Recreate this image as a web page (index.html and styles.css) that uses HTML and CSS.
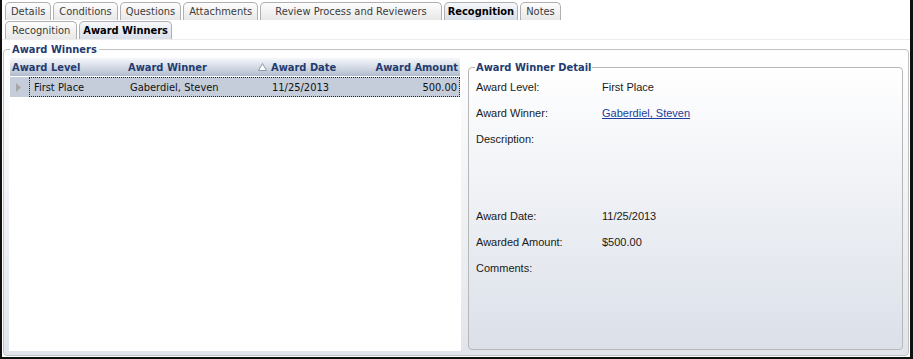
FILE: index.html
```html
<!DOCTYPE html>
<html lang="en">
<head>
  <meta charset="UTF-8" />
  <title>Recognition – Award Winners</title>
  <link rel="stylesheet" href="styles.css">
</head>
<body>
  <div class="window">
    <div class="tabs">
      <span class="tab">Details</span>
      <span class="tab">Conditions</span>
      <span class="tab">Questions</span>
      <span class="tab">Attachments</span>
      <span class="tab wide">Review Process and Reviewers</span>
      <span class="tab active">Recognition</span>
      <span class="tab">Notes</span>
    </div>
    <div class="tabs sub">
      <span class="tab">Recognition</span>
      <span class="tab active">Award Winners</span>
    </div>

    <fieldset class="group">
      <legend>Award Winners</legend>
      <div class="split">
        <div class="grid">
          <div class="grid-head">
            <span>Award Level</span>
            <span>Award Winner</span>
            <span class="sorted">
              <svg width="9" height="8" viewBox="0 0 9 8"><path d="M4.5 0.5 L8.5 7.5 L0.5 7.5 Z" fill="#fff" stroke="#8e98a9" stroke-width="1"/></svg>
              Award Date
            </span>
            <span class="num">Award Amount</span>
          </div>
          <div class="grid-row">
            <span class="row-mark">
              <svg width="5" height="9" viewBox="0 0 5 9"><path d="M0 0 L5 4.5 L0 9 Z" fill="#a6a6a6"/></svg>
            </span>
            <div class="cells">
              <span>First Place</span>
              <span>Gaberdiel, Steven</span>
              <span class="date">11/25/2013</span>
              <span class="num">500.00</span>
            </div>
          </div>
        </div>

        <fieldset class="detail">
          <legend>Award Winner Detail</legend>
          <dl>
            <div class="field"><dt>Award Level:</dt><dd>First Place</dd></div>
            <div class="field"><dt>Award Winner:</dt><dd><a href="#">Gaberdiel, Steven</a></dd></div>
            <div class="field field-tall"><dt>Description:</dt><dd></dd></div>
            <div class="field"><dt>Award Date:</dt><dd>11/25/2013</dd></div>
            <div class="field"><dt>Awarded Amount:</dt><dd>$500.00</dd></div>
            <div class="field"><dt>Comments:</dt><dd></dd></div>
          </dl>
        </fieldset>
      </div>
    </fieldset>
  </div>
</body>
</html>
```

FILE: styles.css
```css
* {
  box-sizing: border-box;
}

body {
  margin: 0;
  background: #fff;
  font-family: "DejaVu Sans Condensed", "DejaVu Sans", sans-serif;
  font-size: 11px;
  color: #111;
}

.window {
  width: 913px;
  height: 359px;
  display: flex;
  flex-direction: column;
  border-left: 2px solid #111;
  border-right: 3px solid #111;
  border-bottom: 2px solid #111;
  background: #fff;
}

/* tab strips */
.tabs {
  display: flex;
  gap: 2px;
  height: 20px;
  padding: 2px 0 0 3px;
}

.tabs.sub {
  padding-top: 1px;
  border-bottom: 1px solid #ececec;
}

.tab {
  height: 18px;
  line-height: 17px;
  padding: 0 5px;
  border: 1px solid #b0b0b0;
  border-bottom: 0;
  border-radius: 5px 5px 0 0;
  background: linear-gradient(#fdfdfd, #e8e8e8);
  color: #3c3c3c;
  white-space: nowrap;
}

.tabs.sub .tab {
  padding: 0 6px;
}

.tab.wide {
  padding: 0 14px;
}

.tab.active,
.tabs.sub .tab.active {
  padding: 0 3px;
  font-weight: bold;
  color: #000;
  background: linear-gradient(#f6f8fb, #d8dfe9);
}

/* outer group */
.group {
  flex: 1;
  display: flex;
  min-width: 0;
  min-height: 0;
  margin: 3px 1px 1px;
  padding: 2px 5px 4px;
  border: 1px solid #c2c2c2;
  border-radius: 4px;
  background: linear-gradient(#fff, #e1e5eb);
}

.group > legend,
.detail > legend {
  line-height: 13px;
  font-weight: bold;
  color: #1f3b70;
}

.group > legend {
  padding: 0 2px;
  margin-left: 1px;
}

.split {
  flex: 1;
  display: flex;
  gap: 7px;
}

/* award winners grid */
.grid {
  width: 452px;
  padding: 0 1px;
  background: #fff;
}

.grid-head {
  display: grid;
  grid-template-columns: 116px 130px 110px 1fr;
  align-items: center;
  height: 18px;
  background: linear-gradient(#f5f7fa, #d2d9e4 55%, #aebbcd);
  font-weight: bold;
  color: #1f3b70;
}

.grid-head span {
  padding: 0 2px;
  white-space: nowrap;
}

.grid-head .sorted {
  display: flex;
  align-items: center;
  gap: 4px;
}

.grid-head .num {
  text-align: right;
}

.grid-row {
  display: flex;
  height: 20px;
  margin-top: 1px;
  background: #c5cddb;
}

.row-mark {
  width: 19px;
  display: flex;
  align-items: center;
  padding-left: 6px;
}

.cells {
  flex: 1;
  display: grid;
  grid-template-columns: 96px 130px 110px 1fr;
  align-items: center;
  border: 1px dotted #222;
  color: #111;
}

.cells span {
  padding-left: 4px;
  white-space: nowrap;
}

.cells .date {
  padding-left: 16px;
}

.cells .num {
  text-align: right;
  padding-right: 2px;
}

/* detail panel */
.detail {
  flex: 1;
  min-width: 0;
  margin: 3px 0 1px;
  padding: 7px 7px 0;
  border: 1px solid #b7b7b7;
  border-radius: 4px;
  background: linear-gradient(#fff, #dbe0e9);
}

.detail > legend {
  padding: 0 1px;
  margin-left: -1px;
}

.detail dl {
  margin: 0;
}

.field {
  display: flex;
  height: 26px;
  font-family: "Liberation Sans", Arial, sans-serif;
  line-height: 13px;
  color: #1a1a1a;
}

.field-tall {
  height: 77px;
}

.field dt {
  width: 126px;
}

.field dd {
  margin: 0;
}

.field a {
  color: #1d3c9e;
}
```
